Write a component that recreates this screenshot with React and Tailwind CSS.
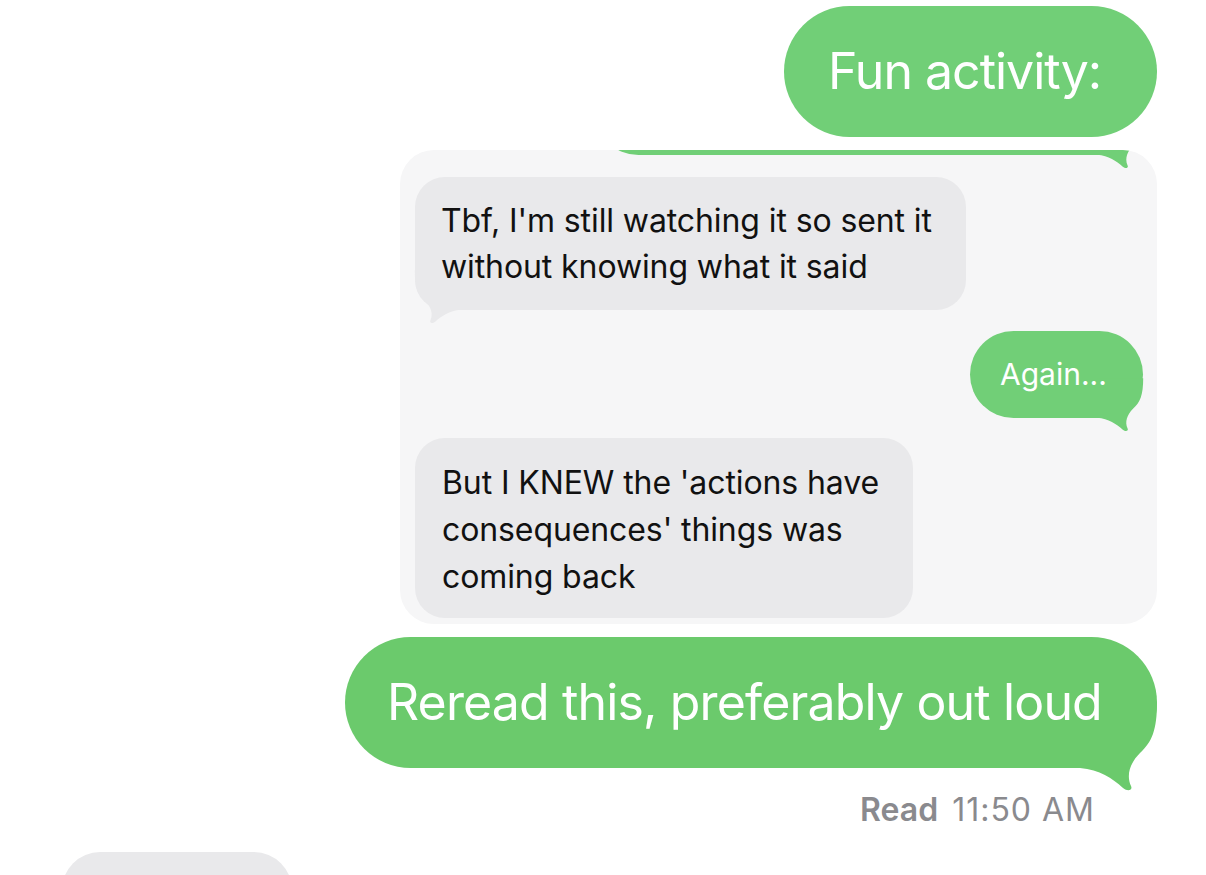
import React from 'react';
import clsx from 'clsx';

// iOS style bubble tail, drawn for a right-side bubble; flip for left
const Tail = ({ color, className }) => (
  <svg viewBox="0 0 90 110" className={clsx('absolute pointer-events-none', className)}>
    <path
      d="M5 83 L5 17 L82 17 C82 45 77 57 65 68 C55 78 51 90 56 101 C58 105 53 107 48 103 C37 93 25 85 5 83 Z"
      fill={color}
    />
  </svg>
);

const GREEN = '#71cf77';
const GREEN_DARK = '#6bca6c';
const GRAY = '#e9e9eb';

const App = () => {
  return (
    <div className="w-[1206px] h-[875px] overflow-hidden bg-white font-['Inter',sans-serif] flex flex-col">
      <div className="flex flex-col items-end pr-[49px] pt-[6px]">
        <div className="w-[373px] h-[131px] rounded-full bg-[#71cf77] flex items-center pl-[44px]">
          <span className="text-white text-[50px] tracking-[-1px]">Fun activity:</span>
        </div>

        <div className="mt-[13px] w-[757px] h-[474px] rounded-[34px] bg-[#f6f6f7] overflow-hidden flex flex-col pl-[15px] pr-[14px]">
          <div className="relative self-end w-[548px] h-[87px] -mt-[82px] rounded-full bg-[#71cf77] shrink-0">
            <Tail color={GREEN} className="w-[54px] h-[66px] -right-[5px] -bottom-[16px]" />
          </div>

          <div className="relative mt-[22px] w-[551px] h-[133px] rounded-[30px] bg-[#e9e9eb] pl-[26px] pt-[21px]">
            <Tail color={GRAY} className="w-[54px] h-[66px] -left-[5px] -bottom-[16px] -scale-x-100" />
            <p className="relative text-[32px] leading-[46px] tracking-[-0.1px] text-[#111]">
              Tbf, I'm still watching it so sent it
              <br />
              without knowing what it said
            </p>
          </div>

          <div className="relative self-end mt-[21px] w-[173px] h-[87px] rounded-full bg-[#71cf77] flex items-center pl-[30px]">
            <Tail color={GREEN} className="w-[54px] h-[66px] -right-[5px] -bottom-[16px]" />
            <span className="relative text-white text-[30px]">Again...</span>
          </div>

          <div className="mt-[20px] w-[498px] h-[180px] rounded-[30px] bg-[#e9e9eb] pl-[27px] pt-[21px]">
            <p className="text-[32px] leading-[47px] tracking-[-0.1px] text-[#111]">
              But I KNEW the 'actions have
              <br />
              consequences' things was
              <br />
              coming back
            </p>
          </div>
        </div>

        <div className="relative mt-[13px] w-[812px] h-[131px] rounded-full bg-[#6bca6c] flex items-center pl-[42px]">
          <Tail color={GREEN_DARK} className="w-[90px] h-[110px] -right-[8px] -bottom-[27px]" />
          <span className="relative text-white text-[50px] tracking-[-0.85px]">Reread this, preferably out loud</span>
        </div>

        <div className="mt-[24px] mr-[62px] h-[36px] flex items-center text-[32px] text-[#8a8a8e]">
          <span className="font-semibold">Read</span>
          <span className="ml-[14px] tracking-[1px]">11:50 AM</span>
        </div>
      </div>

      <div className="mt-[24px] ml-[62px] w-[230px] h-[80px] rounded-[38px] bg-[#e9e9eb] shrink-0" />
    </div>
  );
};

export default App;
